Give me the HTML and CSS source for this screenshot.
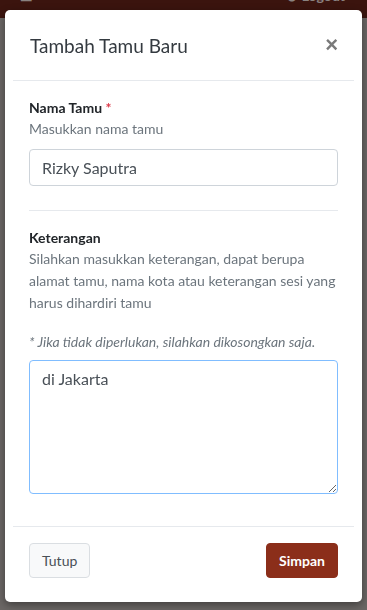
FILE: index.html
```html
<!DOCTYPE html>
<html lang="en">
<head>
  <meta charset="UTF-8">
  <title>Tambah Tamu Baru</title>
  <link rel="stylesheet" href="styles.css">
</head>
<body>

  <div class="top-bar">
    <span class="menu-icon">&#9776;</span>
    <span class="logout">&#10162; Logout</span>
  </div>

  <div class="backdrop">
    <div class="modal">
      <div class="modal-header">
        <h5>Tambah Tamu Baru</h5>
        <button class="close">&times;</button>
      </div>

      <div class="modal-body">
        <div class="form-group">
          <label>Nama Tamu <span class="req">*</span></label>
          <p class="help">Masukkan nama tamu</p>
          <input type="text" class="form-control" value="Rizky Saputra">
        </div>

        <hr>

        <div class="form-group">
          <label>Keterangan</label>
          <p class="help">Silahkan masukkan keterangan, dapat berupa alamat tamu, nama kota atau keterangan sesi yang harus dihardiri tamu</p>
          <p class="help note">* Jika tidak diperlukan, silahkan dikosongkan saja.</p>
          <textarea class="form-control focus">di Jakarta</textarea>
        </div>
      </div>

      <div class="modal-footer">
        <button class="btn btn-light">Tutup</button>
        <button class="btn btn-primary">Simpan</button>
      </div>
    </div>
  </div>

</body>
</html>
```

FILE: styles.css
```css
body {
  margin: 0;
  font-family: Lato, "Noto Sans", sans-serif;
  background: #6b6765;
  height: 610px;
  overflow: hidden;
}
.top-bar {
  height: 18px;
  background: #3b140e;
  display: flex;
  justify-content: space-between;
  align-items: flex-end;
  padding: 0 22px 0 20px;
  overflow: hidden;
}
.menu-icon,
.logout {
  color: #8a8280;
  font-size: 14px;
  font-weight: bold;
  margin-bottom: 14px;
}
/* modal layer sits over the page */
.backdrop {
  position: fixed;
  top: 0;
  left: 0;
  right: 0;
  padding: 10px 5px 0;
}
.modal {
  background: #fff;
  border-radius: 5px;
  padding: 0 8px 8px;
  box-shadow: 0 3px 8px rgba(0, 0, 0, 0.4);
}
.modal-header {
  display: flex;
  justify-content: space-between;
  align-items: center;
  height: 70px;
  padding: 0 16px 0 17px;
  border-bottom: 1px solid #e6e9ed;
}
.modal-header h5 {
  margin: 0;
  font-size: 19px;
  font-weight: normal;
  color: #343a40;
}
.close {
  border: none;
  background: none;
  font-size: 22px;
  font-weight: bold;
  color: #7a7a7a;
  padding: 0;
  line-height: 1;
}
.modal-body {
  padding: 16px 16px 16px;
}
.form-group {
  margin-bottom: 16px;
}
label {
  display: block;
  font-size: 14px;
  font-weight: bold;
  color: #212529;
  line-height: 21px;
}
.req {
  color: #dc3545;
}
.help {
  margin: 0;
  font-size: 14px;
  color: #6c757d;
  line-height: 22px;
}
.note {
  font-style: italic;
  margin: 17px 0 7px;
}
.form-control {
  display: block;
  box-sizing: border-box;
  width: 100%;
  font-family: inherit;
  font-size: 16px;
  color: #495057;
  border: 1px solid #ced4da;
  border-radius: 4px;
  padding: 6px 12px;
}
input.form-control {
  height: 37px;
  margin-top: 9px;
}
textarea.form-control {
  height: 134px;
  resize: vertical;
  line-height: 24px;
}
.focus {
  border-color: #80bdff;
}
hr {
  border: none;
  border-top: 1px solid #e6e9ed;
  margin: 24px 0 16px;
}
.modal-footer {
  display: flex;
  justify-content: space-between;
  padding: 16px 16px 16px;
  border-top: 1px solid #e6e9ed;
}
.btn {
  font-family: inherit;
  font-size: 14px;
  height: 35px;
  padding: 0 12px;
  border-radius: 4px;
}
.btn-light {
  background: #f8f9fa;
  border: 1px solid #dadee2;
  color: #495057;
}
.btn-primary {
  background: #8b2e1a;
  border: 1px solid #8b2e1a;
  color: #fff;
  font-weight: bold;
}
```
